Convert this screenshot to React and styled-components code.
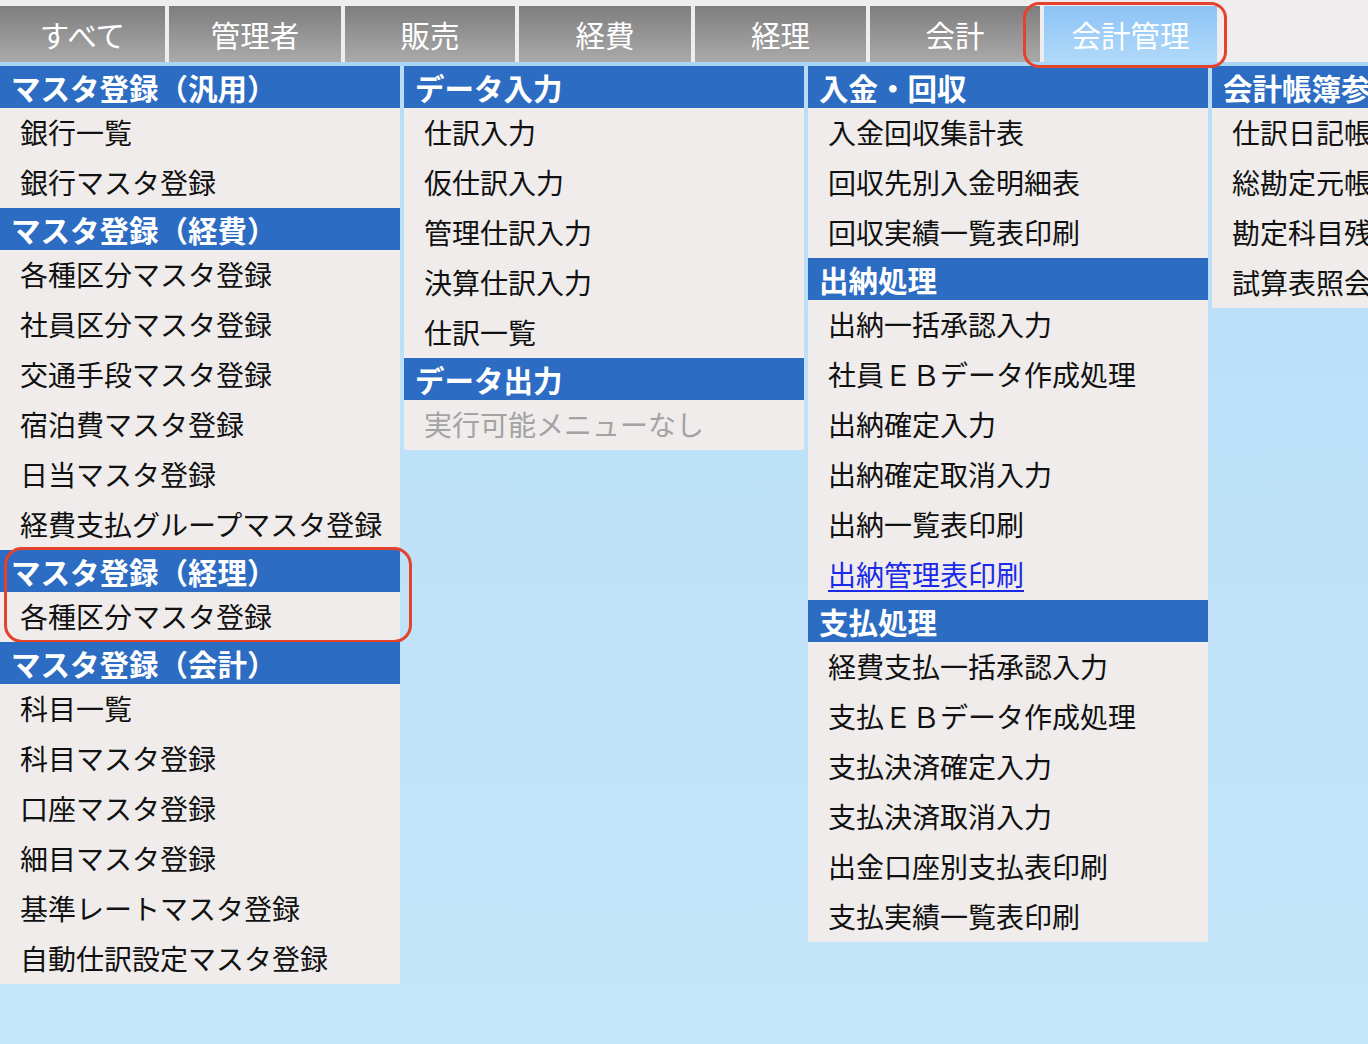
import React from 'react';
import styled, { createGlobalStyle, css } from 'styled-components';

const GlobalStyle = createGlobalStyle`
  html, body {
    margin: 0;
    padding: 0;
    overflow: hidden;
  }
  body {
    font-family: "Noto Sans CJK JP", "Noto Sans", sans-serif;
  }
`;

const Page = styled.div`
  width: 1368px;
  height: 1044px;
  overflow: hidden;
  background: linear-gradient(#b7ddf7, #c5e6f9);
`;

const TabBar = styled.div`
  display: flex;
  gap: 4px;
  padding-top: 6px;
  background: #efeded;
  border-bottom: 4px solid #a8d6f6;
  position: relative;
  z-index: 2;
`;

const Tab = styled.div`
  position: relative;
  flex-shrink: 0;
  width: ${(p) => p.$w}px;
  height: 56px;
  display: flex;
  align-items: center;
  justify-content: center;
  color: #fff;
  font-size: 29.5px;
  background: linear-gradient(#7e7e7e, #aaaaaa);
  ${(p) =>
    p.$active &&
    css`
      background: linear-gradient(#8dc3f5, #b0d9f9);
    `}
`;

const Ring = styled.div`
  position: absolute;
  border: 3px solid #e5422c;
  border-radius: 16px;
  pointer-events: none;
`;

const TabRing = styled(Ring)`
  top: -4px;
  bottom: -6px;
  left: -21px;
  right: -10px;
`;

const SectionRing = styled(Ring)`
  top: -3px;
  bottom: -1px;
  left: 4px;
  right: -12px;
  border-radius: 18px;
`;

const Columns = styled.div`
  display: flex;
  gap: 4px;
  align-items: flex-start;
`;

const Column = styled.div`
  width: 400px;
  flex-shrink: 0;
  background: #efeceb;
`;

const Section = styled.div`
  position: relative;
`;

const Header = styled.div`
  height: 42px;
  line-height: 42px;
  padding-left: 11px;
  background: #2c6cc3;
  color: #fff;
  font-size: 29.5px;
  font-weight: 700;
  white-space: nowrap;
  overflow: hidden;
`;

const Item = styled.div`
  height: 50px;
  line-height: 49px;
  padding-left: 20px;
  font-size: 28px;
  color: #111;
  white-space: nowrap;
  overflow: hidden;
  ${(p) =>
    p.$link &&
    css`
      color: #1a2ae8;
      text-decoration: underline;
      text-underline-offset: 4px;
    `}
  ${(p) =>
    p.$disabled &&
    css`
      color: #a3a3a3;
    `}
`;

const tabs = [
  { label: 'すべて', w: 165 },
  { label: '管理者', w: 172 },
  { label: '販売', w: 170 },
  { label: '経費', w: 172 },
  { label: '経理', w: 171 },
  { label: '会計', w: 170 },
  { label: '会計管理', w: 173, active: true },
];

const columns = [
  [
    { title: 'マスタ登録（汎用）', items: ['銀行一覧', '銀行マスタ登録'] },
    {
      title: 'マスタ登録（経費）',
      items: [
        '各種区分マスタ登録',
        '社員区分マスタ登録',
        '交通手段マスタ登録',
        '宿泊費マスタ登録',
        '日当マスタ登録',
        '経費支払グループマスタ登録',
      ],
    },
    { title: 'マスタ登録（経理）', items: ['各種区分マスタ登録'], ring: true },
    {
      title: 'マスタ登録（会計）',
      items: [
        '科目一覧',
        '科目マスタ登録',
        '口座マスタ登録',
        '細目マスタ登録',
        '基準レートマスタ登録',
        '自動仕訳設定マスタ登録',
      ],
    },
  ],
  [
    {
      title: 'データ入力',
      items: ['仕訳入力', '仮仕訳入力', '管理仕訳入力', '決算仕訳入力', '仕訳一覧'],
    },
    { title: 'データ出力', items: [{ text: '実行可能メニューなし', disabled: true }] },
  ],
  [
    {
      title: '入金・回収',
      items: ['入金回収集計表', '回収先別入金明細表', '回収実績一覧表印刷'],
    },
    {
      title: '出納処理',
      items: [
        '出納一括承認入力',
        '社員ＥＢデータ作成処理',
        '出納確定入力',
        '出納確定取消入力',
        '出納一覧表印刷',
        { text: '出納管理表印刷', link: true },
      ],
    },
    {
      title: '支払処理',
      items: [
        '経費支払一括承認入力',
        '支払ＥＢデータ作成処理',
        '支払決済確定入力',
        '支払決済取消入力',
        '出金口座別支払表印刷',
        '支払実績一覧表印刷',
      ],
    },
  ],
  [
    {
      title: '会計帳簿参照',
      items: ['仕訳日記帳', '総勘定元帳', '勘定科目残高', '試算表照会'],
    },
  ],
];

export default function App() {
  return (
    <Page>
      <GlobalStyle />
      <TabBar>
        {tabs.map((t) => (
          <Tab key={t.label} $w={t.w} $active={t.active}>
            {t.label}
            {t.active && <TabRing />}
          </Tab>
        ))}
      </TabBar>
      <Columns>
        {columns.map((col, ci) => (
          <Column key={ci}>
            {col.map((sec) => (
              <Section key={sec.title}>
                <Header>{sec.title}</Header>
                {sec.items.map((it) => {
                  const item = typeof it === 'string' ? { text: it } : it;
                  return (
                    <Item key={item.text} $link={item.link} $disabled={item.disabled}>
                      {item.text}
                    </Item>
                  );
                })}
                {sec.ring && <SectionRing />}
              </Section>
            ))}
          </Column>
        ))}
      </Columns>
    </Page>
  );
}
